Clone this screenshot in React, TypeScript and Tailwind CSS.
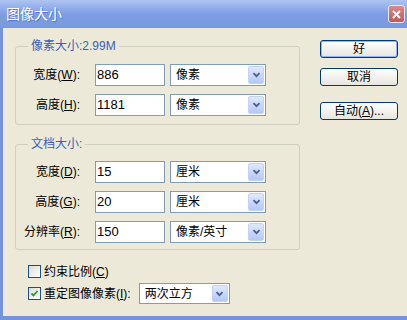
import React from "react";

function Arrow() {
  return (
    <div className="w-[16px] my-[1px] mr-[1px] rounded-[2px] border border-[#c3d3f7] bg-linear-to-b from-[#dfe8fd] to-[#b4c8f5] flex items-center justify-center">
      <svg width="9" height="6" viewBox="0 0 9 6">
        <path d="M1.5 1.2 L4.5 4.2 L7.5 1.2" stroke="#4a5f8a" strokeWidth="1.8" fill="none" />
      </svg>
    </div>
  );
}

function Select({ label, className }: { label: string; className: string }) {
  return (
    <div className={`flex border border-[#7f9db9] bg-white ${className}`}>
      <span className="flex-1 pl-[5px] flex items-center">{label}</span>
      <Arrow />
    </div>
  );
}

function Input({ value }: { value: string }) {
  return (
    <div className="w-[70px] h-[22px] border border-[#7f9db9] bg-white pl-[1px] flex items-center text-[13px]">
      {value}
    </div>
  );
}

function Row({ pre, key1, post, value, unit }: { pre: string; key1: string; post: string; value: string; unit: string }) {
  return (
    <div className="flex items-center h-[22px]">
      <div className="w-[64px] text-right whitespace-nowrap">
        {pre}(<span className="underline">{key1}</span>){post}
      </div>
      <div className="ml-[15px]">
        <Input value={value} />
      </div>
      <Select label={unit} className="ml-[5px] w-[96px] h-[22px]" />
    </div>
  );
}

function Button({ children, def }: { children: React.ReactNode; def?: boolean }) {
  return (
    <div
      className={`w-[78px] h-[18px] rounded-[3px] border border-[#003c74] bg-linear-to-b from-[#ffffff] to-[#e6e5de] flex items-center justify-center ${
        def ? "shadow-[inset_0_0_0_1px_#97b5ec]" : ""
      }`}
    >
      {children}
    </div>
  );
}

function Check({ checked }: { checked?: boolean }) {
  return (
    <div className="w-[13px] h-[13px] border border-[#1c5180] bg-linear-to-br from-[#dcdcd6] to-[#ffffff] flex items-center justify-center">
      {checked && (
        <svg width="9" height="9" viewBox="0 0 9 9">
          <path d="M1.5 4.5 L3.5 6.5 L7.5 2" stroke="#21a121" strokeWidth="1.8" fill="none" />
        </svg>
      )}
    </div>
  );
}

export default function App() {
  return (
    <div className="w-[407px] h-[320px] flex flex-col bg-[#ece9d8] text-[12px] text-black font-['Liberation_Sans','Noto_Sans_CJK_SC',sans-serif] overflow-hidden">
      <div className="h-[28px] flex items-center justify-between pl-[6px] pr-[2px] bg-linear-to-b from-[#aec4f0] via-[#7e9de3] to-[#7898e0]">
        <span className="text-white text-[14px] leading-none [text-shadow:1px_1px_0_#5a78c4]">图像大小</span>
        <div className="w-[17px] h-[18px] rounded-[3px] border border-[#e8e8f0] bg-linear-to-b from-[#d98a8a] to-[#c0595e] flex items-center justify-center">
          <svg width="9" height="9" viewBox="0 0 9 9">
            <path d="M1 1 L8 8 M8 1 L1 8" stroke="white" strokeWidth="2" />
          </svg>
        </div>
      </div>
      <div className="flex-1 flex border-l-[3px] border-b-[4px] border-[#7592da]">
        <div className="w-[297px] pl-[12px] flex flex-col">
          <fieldset className="mt-[11px] border border-[#d0d0bf] rounded-[3px] pb-[8px] pt-[11px]">
            <legend className="ml-[12px] px-[3px] leading-[14px] text-[#3a60b8]">像素大小:2.99M</legend>
            <div className="flex flex-col gap-[8px]">
              <Row pre="宽度" key1="W" post=":" value="886" unit="像素" />
              <Row pre="高度" key1="H" post=":" value="1181" unit="像素" />
            </div>
          </fieldset>
          <fieldset className="mt-[12px] border border-[#d0d0bf] rounded-[3px] pb-[6px] pt-[10px]">
            <legend className="ml-[12px] px-[3px] leading-[14px] text-[#3a60b8]">文档大小:</legend>
            <div className="flex flex-col gap-[8px]">
              <Row pre="宽度" key1="D" post=":" value="15" unit="厘米" />
              <Row pre="高度" key1="G" post=":" value="20" unit="厘米" />
              <Row pre="分辨率" key1="R" post=":" value="150" unit="像素/英寸" />
            </div>
          </fieldset>
          <div className="mt-[15px] ml-[13px] flex items-center gap-[3px] h-[13px]">
            <Check />
            <span>
              约束比例(<span className="underline">C</span>)
            </span>
          </div>
          <div className="mt-[5px] ml-[13px] flex items-center">
            <Check checked />
            <span className="ml-[3px]">
              重定图像像素(<span className="underline">I</span>):
            </span>
            <Select label="两次立方" className="ml-[8px] w-[91px] h-[21px]" />
          </div>
        </div>
        <div className="pl-[20px] pt-[12px] flex flex-col">
          <Button def>好</Button>
          <div className="mt-[10px]">
            <Button>取消</Button>
          </div>
          <div className="mt-[16px]">
            <Button>
              自动(<span className="underline">A</span>)...
            </Button>
          </div>
        </div>
      </div>
    </div>
  );
}
